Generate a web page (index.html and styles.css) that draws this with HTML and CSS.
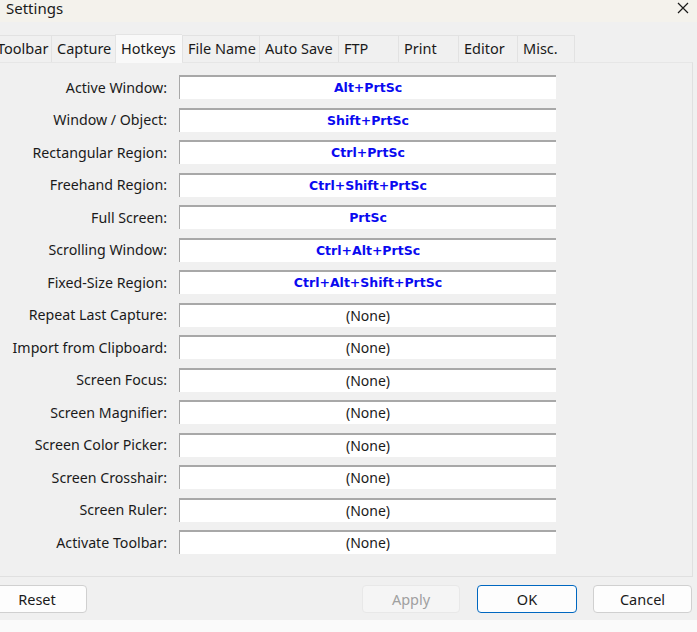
FILE: index.html
```html
<!DOCTYPE html>
<html>
<head>
<meta charset="utf-8">
<link rel="stylesheet" href="styles.css">
</head>
<body>
<div class="window">
  <div class="titlebar">
    <span class="title">Settings</span>
    <svg class="close" width="12" height="12" viewBox="0 0 12 12"><path d="M1 1L11 11M11 1L1 11" stroke="#1a1a1a" stroke-width="1.2"/></svg>
  </div>
  <div class="tabs">
    <div class="tab" style="width:60px">Toolbar</div>
    <div class="tab" style="width:64px">Capture</div>
    <div class="tab active" style="width:67px">Hotkeys</div>
    <div class="tab" style="width:77px">File Name</div>
    <div class="tab" style="width:79px">Auto Save</div>
    <div class="tab" style="width:60px">FTP</div>
    <div class="tab" style="width:60px">Print</div>
    <div class="tab" style="width:59px">Editor</div>
    <div class="tab" style="width:58px">Misc.</div>
  </div>
  <div class="panel">
    <div class="row"><span class="label">Active Window:</span><div class="box key">Alt+PrtSc</div></div>
    <div class="row"><span class="label">Window / Object:</span><div class="box key">Shift+PrtSc</div></div>
    <div class="row"><span class="label">Rectangular Region:</span><div class="box key">Ctrl+PrtSc</div></div>
    <div class="row"><span class="label">Freehand Region:</span><div class="box key">Ctrl+Shift+PrtSc</div></div>
    <div class="row"><span class="label">Full Screen:</span><div class="box key">PrtSc</div></div>
    <div class="row"><span class="label">Scrolling Window:</span><div class="box key">Ctrl+Alt+PrtSc</div></div>
    <div class="row"><span class="label">Fixed-Size Region:</span><div class="box key">Ctrl+Alt+Shift+PrtSc</div></div>
    <div class="row"><span class="label">Repeat Last Capture:</span><div class="box none">(None)</div></div>
    <div class="row"><span class="label">Import from Clipboard:</span><div class="box none">(None)</div></div>
    <div class="row"><span class="label">Screen Focus:</span><div class="box none">(None)</div></div>
    <div class="row"><span class="label">Screen Magnifier:</span><div class="box none">(None)</div></div>
    <div class="row"><span class="label">Screen Color Picker:</span><div class="box none">(None)</div></div>
    <div class="row"><span class="label">Screen Crosshair:</span><div class="box none">(None)</div></div>
    <div class="row"><span class="label">Screen Ruler:</span><div class="box none">(None)</div></div>
    <div class="row"><span class="label">Activate Toolbar:</span><div class="box none">(None)</div></div>
  </div>
  <div class="footer">
    <button class="btn reset">Reset</button>
    <div class="spacer"></div>
    <button class="btn apply" disabled>Apply</button>
    <button class="btn ok">OK</button>
    <button class="btn cancel">Cancel</button>
  </div>
</div>
</body>
</html>
```

FILE: styles.css
```css
* { box-sizing: border-box; }
html, body { margin: 0; padding: 0; }
body {
  width: 697px;
  height: 632px;
  overflow: hidden;
  background: #fafafa;
  font-family: "Noto Sans", "Open Sans", sans-serif;
  font-size: 14px;
  color: #1a1a1a;
}
.window {
  width: 697px;
  background: #f0f0f0;
}
.titlebar {
  height: 22px;
  background: #f4f2ec;
  display: flex;
  align-items: flex-start;
  justify-content: space-between;
  padding: 0 8px 0 6px;
}
.title {
  font-size: 15px;
  line-height: 17px;
  color: #1a1a1a;
}
.close { margin-top: 2px; }
.tabs {
  display: flex;
  align-items: flex-end;
  height: 40px;
  margin-left: -9px;
  padding-top: 12px;
}
.tab {
  height: 27px;
  border: 1px solid #e2e2e2;
  border-bottom: none;
  border-right: none;
  background: #f0f0f0;
  padding-left: 5px;
  font-size: 14.5px;
  line-height: 25px;
  color: #1a1a1a;
  white-space: nowrap;
}
.tab:last-child { border-right: 1px solid #e2e2e2; }
.tab.active {
  height: 29px;
  background: #f9f9f9;
  border-color: #e4e4e4;
  line-height: 27px;
  position: relative;
  top: 1px;
}
.panel {
  margin-left: -4px;
  width: 697px;
  height: 515px;
  border: 1px solid #e0e0e0;
  border-top-color: #e6e6e6;
  background: #f0f0f0;
  padding-top: 12px;
  display: flex;
  flex-direction: column;
  gap: 8.5px;
}
.row {
  display: flex;
  align-items: center;
  height: 24px;
}
.label {
  width: 174px;
  text-align: right;
  padding-right: 4px;
  font-size: 14.2px;
  color: #1a1a1a;
  white-space: nowrap;
}
.box {
  margin-left: 8px;
  width: 377px;
  height: 24px;
  background: #fff;
  border-top: 2px solid #a8a8a8;
  border-left: 1px solid #a8a8a8;
  text-align: center;
  line-height: 21px;
}
.key {
  color: #0a0af0;
  font-family: "DejaVu Sans", sans-serif;
  font-weight: bold;
  font-size: 12.5px;
}
.none {
  font-size: 14px;
  color: #1a1a1a;
}
.footer {
  height: 43px;
  display: flex;
  align-items: center;
  padding: 0 5px 0 0;
  margin-left: -13px;
  width: 710px;
}
.spacer { flex: 1; }
.btn {
  height: 28px;
  border: 1px solid #d0d0d0;
  border-radius: 4px;
  background: #fdfdfd;
  font-family: "Noto Sans", "Open Sans", sans-serif;
  font-size: 14.5px;
  color: #1a1a1a;
  padding: 0;
}
.reset { width: 100px; }
.apply { width: 98px; background: #f5f5f5; border-color: #e8e8e8; color: #a0a0a0; }
.ok { width: 100px; margin-left: 17px; border-color: #0067c0; }
.cancel { width: 99px; margin-left: 16px; }
```
